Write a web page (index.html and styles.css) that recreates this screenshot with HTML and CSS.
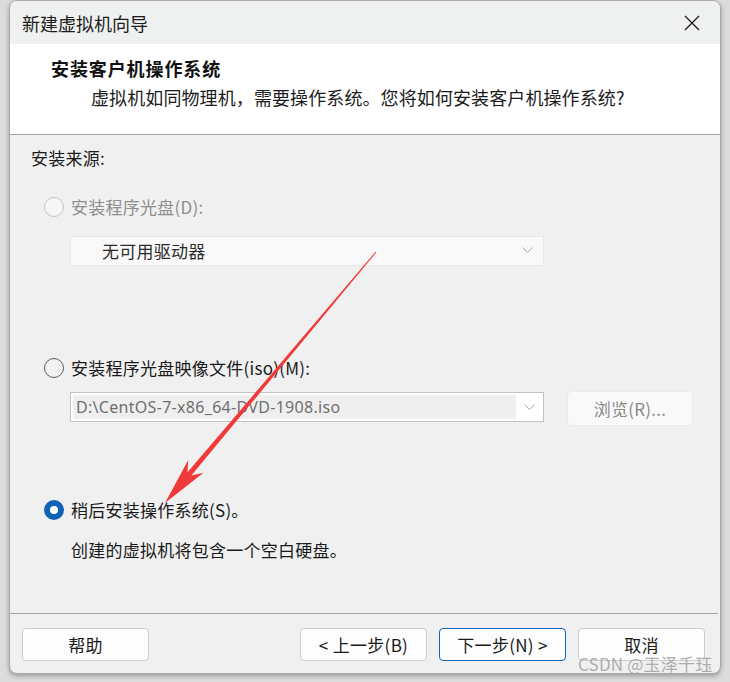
FILE: index.html
```html
<!DOCTYPE html>
<html lang="zh-CN">
<head>
<meta charset="utf-8">
<title>新建虚拟机向导</title>
<link rel="stylesheet" href="styles.css">
</head>
<body>
<div class="window">
  <div class="titlebar">
    <span class="title">新建虚拟机向导</span>
    <svg class="close" width="16" height="16" viewBox="0 0 16 16"><path d="M1 1L15 15M15 1L1 15" stroke="#1a1a1a" stroke-width="1.3" fill="none"/></svg>
  </div>
  <div class="header">
    <div class="h-title">安装客户机操作系统</div>
    <div class="h-sub">虚拟机如同物理机，需要操作系统。您将如何安装客户机操作系统?</div>
  </div>
  <div class="content">
    <div class="section-label">安装来源:</div>
    <div class="radio-row row1">
      <span class="radio disabled"></span>
      <span class="label disabled-text">安装程序光盘(D):</span>
    </div>
    <div class="select disabled-select">
      <span class="select-text">无可用驱动器</span>
      <svg class="chev" width="11" height="7" viewBox="0 0 11 7"><path d="M0.5 0.5L5.5 5.5L10.5 0.5" stroke="#a9a9a9" stroke-width="1" fill="none"/></svg>
    </div>
    <div class="radio-row row2">
      <span class="radio off"></span>
      <span class="label">安装程序光盘映像文件(iso)(M):</span>
    </div>
    <div class="iso-row">
      <div class="combo">
        <span class="combo-text">D:\CentOS-7-x86_64-DVD-1908.iso</span>
        <span class="combo-btn"><svg width="11" height="7" viewBox="0 0 11 7"><path d="M0.5 0.5L5.5 5.5L10.5 0.5" stroke="#a9a9a9" stroke-width="1" fill="none"/></svg></span>
      </div>
      <div class="browse">浏览(R)...</div>
    </div>
    <div class="radio-row row3">
      <span class="radio on"></span>
      <span class="label">稍后安装操作系统(S)。</span>
    </div>
    <div class="desc">创建的虚拟机将包含一个空白硬盘。</div>
  </div>
  <div class="footer">
    <div class="btn">帮助</div>
    <div class="spacer"></div>
    <div class="btn">&lt; 上一步(B)</div>
    <div class="btn primary">下一步(N) &gt;</div>
    <div class="btn">取消</div>
  </div>
</div>
<div class="watermark">CSDN @玉泽千珏</div>
<svg class="arrow" width="730" height="682" viewBox="0 0 730 682">
  <polygon fill="#f03a3a" points="376.4,252.3 191.3,475.5 203.5,472.7 165,503 188.2,459.9 187.5,472.3 375.6,251.7"/>
</svg>
</body>
</html>
```
FILE: styles.css
```css
html, body {
  margin: 0;
  padding: 0;
}
body {
  width: 730px;
  height: 682px;
  background: #dcdcdc;
  font-family: "Noto Sans CJK SC", "Noto Sans", sans-serif;
  color: #1a1a1a;
  position: relative;
  overflow: hidden;
}
.window {
  position: relative;
  margin-left: 9px;
  margin-top: 0;
  width: 710px;
  height: 672px;
  border: 1px solid #a9a9a9;
  border-radius: 8px;
  background: #f0f0f0;
  overflow: hidden;
  display: flex;
  flex-direction: column;
  box-shadow: 0 2px 5px rgba(0,0,0,0.3);
}
.titlebar {
  height: 43px;
  flex: none;
  background: #eef1f0;
  display: flex;
  align-items: center;
  padding-left: 12px;
  padding-right: 20px;
}
.title {
  font-size: 18px;
  line-height: 24px;
  flex: 1;
  color: #1b1b1b;
}
.close {
  display: block;
  margin-top: 1px;
}
.header {
  height: 90px;
  flex: none;
  background: #ffffff;
  border-bottom: 1px solid #a3a3a3;
  box-sizing: content-box;
}
.h-title {
  margin-top: 12px;
  margin-left: 41px;
  font-size: 18px;
  line-height: 24px;
  font-weight: bold;
  letter-spacing: 0.9px;
  color: #111;
}
.h-sub {
  margin-top: 5px;
  margin-left: 81px;
  font-size: 18px;
  line-height: 24px;
  letter-spacing: 0.1px;
  color: #1b1b1b;
}
.content {
  flex: 1;
  padding-top: 11px;
  padding-left: 21px;
  font-size: 17px;
  letter-spacing: 0.25px;
}
.section-label {
  line-height: 24px;
}
.radio-row {
  display: flex;
  align-items: center;
  height: 24px;
  margin-left: 13px;
}
.row1 { margin-top: 25px; }
.row2 { margin-top: 90px; }
.row3 { margin-top: 72px; }
.radio {
  width: 20px;
  height: 20px;
  border-radius: 50%;
  box-sizing: border-box;
  flex: none;
  margin-right: 7px;
}
.radio.disabled {
  border: 1px solid #c4c4c4;
  background: #f6f6f6;
}
.radio.off {
  border: 1px solid #5c5c5c;
  background: #f2f2f2;
}
.radio.on {
  border: 6px solid #0f62b5;
  background: #ffffff;
}
.label {
  line-height: 24px;
  color: #1a1a1a;
}
.disabled-text {
  color: #8e8e8e;
}
.select {
  margin-top: 17px;
  margin-left: 39px;
  width: 474px;
  height: 30px;
  box-sizing: border-box;
  display: flex;
  align-items: center;
  justify-content: space-between;
}
.disabled-select {
  background: #f9f9f9;
  border: 1px solid #e8e8e8;
  padding-left: 31px;
  padding-right: 10px;
  padding-bottom: 2px;
}
.select-text {
  color: #2a2a2a;
}
.chev {
  display: block;
}
.iso-row {
  margin-top: 11px;
  margin-left: 39px;
  display: flex;
  align-items: flex-start;
}
.combo {
  margin-top: 1px;
  width: 474px;
  height: 30px;
  box-sizing: border-box;
  border: 1px solid #c3c3c3;
  background: #ffffff;
  display: flex;
}
.combo-text {
  flex: 1;
  background: #efefef;
  margin: 2px 0 2px 2px;
  padding-left: 3px;
  font-family: "Noto Sans", sans-serif;
  font-size: 16px;
  letter-spacing: 0.3px;
  line-height: 24px;
  color: #6f6f6f;
  white-space: nowrap;
}
.combo-btn {
  width: 27px;
  display: flex;
  align-items: center;
  justify-content: center;
}
.browse {
  margin-left: 23px;
  width: 126px;
  height: 35px;
  box-sizing: border-box;
  border: 1px solid #ebebeb;
  border-radius: 4px;
  background: #f9f9f9;
  color: #8a8a8a;
  display: flex;
  align-items: center;
  justify-content: center;
  font-size: 17px;
}
.desc {
  margin-top: 16px;
  margin-left: 40px;
  line-height: 24px;
}
.footer {
  flex: none;
  border-top: 1px solid #a3a3a3;
  padding: 14px 13px 12px 12px;
  display: flex;
  gap: 12px;
  margin-right: 2px;
}
.spacer {
  flex: 1;
}
.btn {
  width: 127px;
  height: 33px;
  box-sizing: border-box;
  border: 1px solid #cdcdcd;
  border-radius: 4px;
  background: #fdfdfd;
  display: flex;
  align-items: center;
  justify-content: center;
  font-size: 17px;
  line-height: 19px;
  letter-spacing: 0.3px;
  color: #1a1a1a;
}
.btn.primary {
  border: 1px solid #1165b9;
}
.watermark {
  position: absolute;
  left: 578px;
  top: 655px;
  font-size: 17px;
  line-height: 17px;
  color: rgba(160, 160, 160, 0.85);
  letter-spacing: 0.2px;
  white-space: nowrap;
}
.arrow {
  position: absolute;
  left: 0;
  top: 0;
  pointer-events: none;
}
```
